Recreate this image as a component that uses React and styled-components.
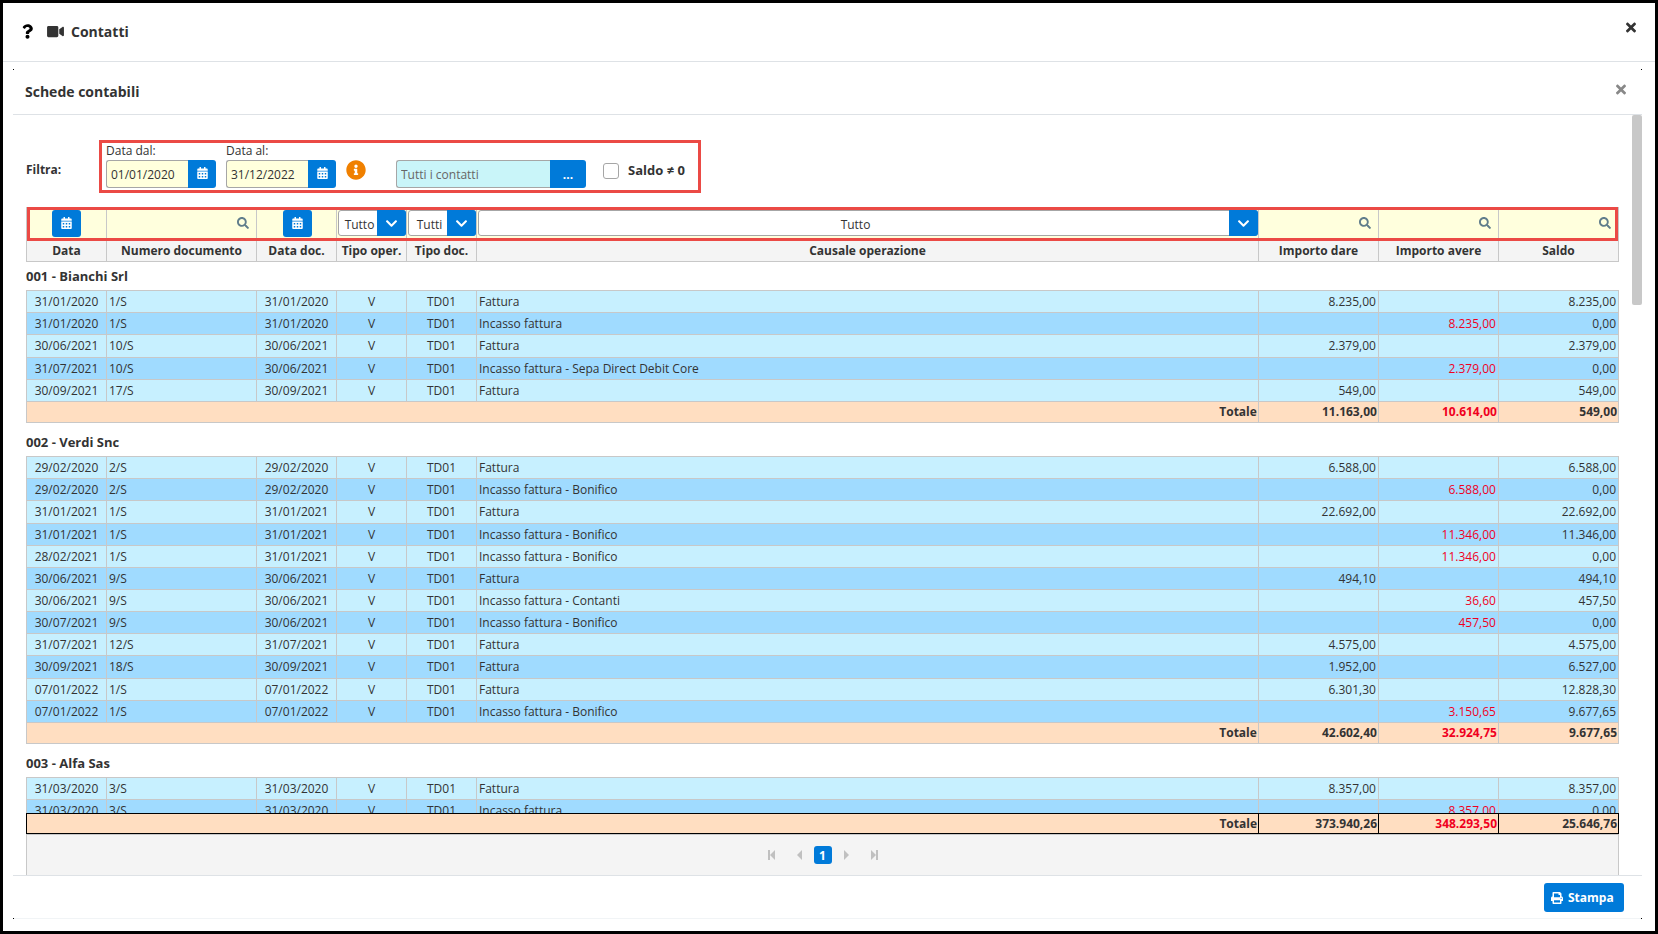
import React from "react";
import styled, { createGlobalStyle } from "styled-components";
import {
  FaQuestion,
  FaVideo,
  FaTimes,
  FaCalendarAlt,
  FaInfoCircle,
  FaSearch,
  FaChevronDown,
  FaPrint,
} from "react-icons/fa";

const c = {
  text: "#333333",
  blue: "#007ad9",
  line: "#c8c8c8",
  divider: "#dee2e6",
  head: "#f4f4f4",
  cream: "#ffffdd",
  rowLight: "#c7f0ff",
  rowDark: "#a0dbff",
  total: "#ffdec1",
  negative: "#f0001e",
  marker: "#eb4a45",
  field: "#a6a6a6",
};

const GlobalStyle = createGlobalStyle`
  *, *::before, *::after { box-sizing: border-box; }
  body { margin: 0; background: #fff; }
  body, button, input, select {
    font-family: "Open Sans", "Noto Sans", sans-serif;
    font-size: 12px;
    color: ${c.text};
  }
`;

const Window = styled.div`
  display: flex;
  flex-direction: column;
  height: 100vh;
  border: 3px solid #000;
  background: #fff;
`;

const TitleBar = styled.header`
  display: flex;
  align-items: center;
  flex: none;
  height: 59px;
  padding: 0 19px 2px 19px;
  border-bottom: 1px solid ${c.divider};
`;

const Title = styled.h1`
  margin: 0 auto 0 7px;
  font-size: 14px;
  font-weight: 700;
`;

const IconButton = styled.button`
  display: flex;
  padding: 0;
  border: 0;
  background: none;
  color: ${(p) => p.$color || c.text};
  margin-right: ${(p) => p.$gap || 0}px;
  padding-bottom: ${(p) => p.$lift || 0}px;
  cursor: pointer;
`;

const Panel = styled.section`
  position: relative;
  display: flex;
  flex-direction: column;
  flex: 1;
  min-height: 0;
  margin: 7px 13px 12px 10px;
  border-bottom: 1px solid #f1f4f6;
`;

const CornerDot = styled.span`
  position: absolute;
  width: 1px;
  height: 1px;
  background: #000;
  ${(p) => p.$v}: ${(p) => (p.$v === "bottom" ? "-1px" : 0)};
  ${(p) => p.$h}: 0;
`;

const PanelHeader = styled.div`
  display: flex;
  align-items: center;
  justify-content: space-between;
  flex: none;
  height: 46px;
  padding: 0 16px 0 12px;
  border-bottom: 1px solid ${c.divider};
`;

const PanelTitle = styled.h2`
  margin: 0;
  font-size: 14px;
  font-weight: 700;
`;

const Body = styled.div`
  display: flex;
  flex: 1;
  min-height: 0;
`;

const Content = styled.div`
  display: flex;
  flex-direction: column;
  flex: 1;
  min-width: 0;
  padding: 25px 13px 0 13px;
`;

const ScrollTrack = styled.div`
  width: 10px;
`;

const ScrollThumb = styled.div`
  height: 25%;
  border-radius: 2px;
  background: #c8c8c8;
`;

const FilterForm = styled.form`
  display: flex;
  align-items: center;
  flex: none;
  margin-bottom: 14px;
`;

const FilterCaption = styled.strong`
  width: 73px;
  padding-top: 6px;
`;

const FilterBox = styled.div`
  display: flex;
  align-items: flex-end;
  height: 53px;
  padding: 0 13px 2px 4px;
  border: 3px solid ${c.marker};
`;

const Field = styled.div`
  display: flex;
  flex-direction: column;
  margin-right: 10px;
`;

const FieldLabel = styled.label`
  height: 17px;
  line-height: 15px;
`;

const InputGroup = styled.div`
  display: flex;
  height: 28px;
  width: ${(p) => p.$width}px;
`;

const TextInput = styled.input`
  flex: 1;
  min-width: 0;
  padding: 1px 4px 0;
  border: 1px solid ${c.field};
  border-right: 0;
  border-radius: 3px 0 0 3px;
  background: ${(p) => p.$bg};
  &::placeholder {
    color: #666;
    opacity: 1;
  }
`;

const BlueButton = styled.button`
  display: inline-flex;
  align-items: center;
  justify-content: center;
  flex: none;
  width: ${(p) => p.$width}px;
  height: ${(p) => p.$height}px;
  padding: 0;
  gap: 5px;
  border: 0;
  border-radius: ${(p) => p.$radius || "3px"};
  background: ${c.blue};
  color: #fff;
  font-weight: 700;
  cursor: pointer;
`;

const StampButton = styled(BlueButton)`
  justify-content: flex-start;
  padding-left: 7px;
`;

const CalendarIcon = styled(FaCalendarAlt)`
  width: 11px;
  height: 12px;
  margin-bottom: 2px;
`;

const InfoSlot = styled.div`
  height: 28px;
  margin-right: 30px;
  color: #f08000;
`;

const CheckRow = styled.div`
  display: flex;
  align-items: center;
  gap: 9px;
  height: 28px;
  margin-left: 17px;
  padding-bottom: 6px;
`;

const CheckBox = styled.input`
  appearance: none;
  width: 16px;
  height: 16px;
  margin: 0;
  border: 1px solid ${c.field};
  border-radius: 3px;
  background: #fff;
`;

const CheckLabel = styled.label`
  padding-bottom: 2px;
  font-size: 13px;
  font-weight: 700;
`;

const Table = styled.table`
  width: 100%;
  table-layout: fixed;
  border-collapse: separate;
  border-spacing: 0;
`;

const HeadWrap = styled.div`
  position: relative;
  flex: none;
`;

const HeadMarker = styled.div`
  position: absolute;
  inset: 0 1px auto 1px;
  height: 34px;
  border: 3px solid ${c.marker};
  pointer-events: none;
`;

const FilterCell = styled.td`
  height: 34px;
  padding: 3px 0 0 1px;
  border-right: 1px solid ${c.line};
  background: ${c.cream};
  text-align: center;
  vertical-align: top;
  &:first-child {
    padding-left: 0;
    border-left: 1px solid ${c.line};
  }
`;

const ColumnHead = styled.th`
  height: 21px;
  padding: 0;
  border-right: 1px solid ${c.line};
  border-bottom: 1px solid ${c.line};
  background: ${c.head};
  line-height: 20px;
  white-space: nowrap;
  &:first-child {
    border-left: 1px solid ${c.line};
  }
`;

const SearchBox = styled.div`
  display: flex;
  align-items: center;
  height: 26px;
  padding: 0 7px 1px 0;
  color: #607d8b;
`;

const SearchInput = styled.input`
  flex: 1;
  min-width: 0;
  padding: 0 4px;
  border: 0;
  outline: 0;
  background: transparent;
`;

const SelectBox = styled.div`
  display: grid;
  grid-template-columns: 1fr 29px;
  height: 26px;
`;

const Select = styled.select`
  grid-area: 1 / 1 / 2 / 3;
  appearance: none;
  width: 100%;
  padding: 2px 27px 0 2px;
  border: 1px solid ${c.field};
  border-radius: 3px;
  background: #fff;
  text-align: center;
  text-align-last: center;
`;

const SelectArrow = styled.span`
  grid-area: 1 / 2 / 2 / 3;
  display: flex;
  align-items: center;
  justify-content: center;
  border-radius: 0 3px 3px 0;
  background: ${c.blue};
  color: #fff;
  pointer-events: none;
`;

const Groups = styled.div`
  flex: 1;
  min-height: 0;
  overflow-y: auto;
  scrollbar-width: none;
`;

const GroupTitle = styled.th`
  height: ${(p) => (p.$first ? 29 : 34)}px;
  padding: ${(p) => (p.$first ? 0 : 4)}px 0 0;
  border-bottom: 1px solid ${c.line};
  font-size: 13px;
  font-weight: 700;
  line-height: 18px;
  text-align: left;
`;

const DataRow = styled.tr`
  height: 22px;
  background: ${(p) => (p.$dark ? c.rowDark : c.rowLight)};
  &:nth-child(7n + 4) {
    height: 23px;
  }
`;

const Cell = styled.td`
  padding: 0 2px;
  border-right: 1px solid ${c.line};
  border-bottom: 1px solid ${c.line};
  line-height: 18px;
  text-align: ${(p) => p.$align || "left"};
  color: ${(p) => (p.$negative ? c.negative : c.text)};
  white-space: nowrap;
  &:first-child {
    border-left: 1px solid ${c.line};
  }
`;

const TotalCell = styled.td`
  height: 21px;
  padding: 0 1px;
  border: 0 solid ${(p) => (p.$grand ? "#000" : c.line)};
  border-width: ${(p) => (p.$grand ? 1 : 0)}px 1px 1px 0;
  background: ${c.total};
  color: ${(p) => (p.$negative ? c.negative : c.text)};
  font-weight: 700;
  line-height: 18px;
  text-align: right;
  &:first-child {
    border-left-width: 1px;
  }
`;

const Pager = styled.nav`
  display: flex;
  align-items: center;
  justify-content: center;
  flex: none;
  height: 41px;
  border: 1px solid ${c.line};
  border-bottom: 0;
  background: ${c.head};
`;

const PagerButton = styled.button`
  display: flex;
  align-items: center;
  justify-content: center;
  width: 28px;
  height: 18px;
  padding: 0;
  border: 0;
  background: none;
  color: #c0c0c0;
`;

const Footer = styled.footer`
  display: flex;
  justify-content: flex-end;
  flex: none;
  height: 43px;
  padding: 7px 18px 0 0;
  border-top: 1px solid ${c.divider};
`;

const columns = [
  ["Data", 81],
  ["Numero documento", 150],
  ["Data doc.", 80],
  ["Tipo oper.", 70],
  ["Tipo doc.", 70],
  ["Causale operazione"],
  ["Importo dare", 120],
  ["Importo avere", 120],
  ["Saldo", 120],
];

/* date, number, document date, description, debit, credit, balance */
const groups = [
  {
    name: "001 - Bianchi Srl",
    rows: [
      ["31/01/2020", "1/S", "31/01/2020", "Fattura", "8.235,00", "", "8.235,00"],
      ["31/01/2020", "1/S", "31/01/2020", "Incasso fattura", "", "8.235,00", "0,00"],
      ["30/06/2021", "10/S", "30/06/2021", "Fattura", "2.379,00", "", "2.379,00"],
      ["31/07/2021", "10/S", "30/06/2021", "Incasso fattura - Sepa Direct Debit Core", "", "2.379,00", "0,00"],
      ["30/09/2021", "17/S", "30/09/2021", "Fattura", "549,00", "", "549,00"],
    ],
    total: ["11.163,00", "10.614,00", "549,00"],
  },
  {
    name: "002 - Verdi Snc",
    rows: [
      ["29/02/2020", "2/S", "29/02/2020", "Fattura", "6.588,00", "", "6.588,00"],
      ["29/02/2020", "2/S", "29/02/2020", "Incasso fattura - Bonifico", "", "6.588,00", "0,00"],
      ["31/01/2021", "1/S", "31/01/2021", "Fattura", "22.692,00", "", "22.692,00"],
      ["31/01/2021", "1/S", "31/01/2021", "Incasso fattura - Bonifico", "", "11.346,00", "11.346,00"],
      ["28/02/2021", "1/S", "31/01/2021", "Incasso fattura - Bonifico", "", "11.346,00", "0,00"],
      ["30/06/2021", "9/S", "30/06/2021", "Fattura", "494,10", "", "494,10"],
      ["30/06/2021", "9/S", "30/06/2021", "Incasso fattura - Contanti", "", "36,60", "457,50"],
      ["30/07/2021", "9/S", "30/06/2021", "Incasso fattura - Bonifico", "", "457,50", "0,00"],
      ["31/07/2021", "12/S", "31/07/2021", "Fattura", "4.575,00", "", "4.575,00"],
      ["30/09/2021", "18/S", "30/09/2021", "Fattura", "1.952,00", "", "6.527,00"],
      ["07/01/2022", "1/S", "07/01/2022", "Fattura", "6.301,30", "", "12.828,30"],
      ["07/01/2022", "1/S", "07/01/2022", "Incasso fattura - Bonifico", "", "3.150,65", "9.677,65"],
    ],
    total: ["42.602,40", "32.924,75", "9.677,65"],
  },
  {
    name: "003 - Alfa Sas",
    rows: [
      ["31/03/2020", "3/S", "31/03/2020", "Fattura", "8.357,00", "", "8.357,00"],
      ["31/03/2020", "3/S", "31/03/2020", "Incasso fattura", "", "8.357,00", "0,00"],
    ],
  },
];

const Columns = () => (
  <colgroup>
    {columns.map(([label, width]) => (
      <col key={label} style={width ? { width } : undefined} />
    ))}
  </colgroup>
);

const DateField = ({ id, label, value }) => (
  <Field>
    <FieldLabel htmlFor={id}>{label}</FieldLabel>
    <InputGroup $width={110}>
      <TextInput id={id} type="text" defaultValue={value} $bg={c.cream} />
      <BlueButton type="button" aria-label={label} $width={28} $height={28} $radius="0 3px 3px 0">
        <CalendarIcon />
      </BlueButton>
    </InputGroup>
  </Field>
);

const DateFilter = ({ label }) => (
  <FilterCell>
    <BlueButton type="button" aria-label={label} $width={29} $height={27}>
      <CalendarIcon />
    </BlueButton>
  </FilterCell>
);

const SearchFilter = ({ label }) => (
  <FilterCell>
    <SearchBox>
      <SearchInput type="text" aria-label={label} />
      <FaSearch size={12} />
    </SearchBox>
  </FilterCell>
);

const SelectFilter = ({ label, value }) => (
  <FilterCell>
    <SelectBox>
      <Select aria-label={label} defaultValue={value}>
        <option>{value}</option>
      </Select>
      <SelectArrow>
        <FaChevronDown size={13} />
      </SelectArrow>
    </SelectBox>
  </FilterCell>
);

const TotalRow = ({ values, grand }) => (
  <tr>
    <TotalCell colSpan={6} $grand={grand}>Totale</TotalCell>
    {values.map((v, i) => (
      <TotalCell key={i} $grand={grand} $negative={i === 1}>{v}</TotalCell>
    ))}
  </tr>
);

const SeekIcon = ({ bar, flip }) => (
  <svg width="8" height="10" viewBox="0 0 8 10" fill="currentColor" aria-hidden="true">
    <g transform={flip ? "translate(8 0) scale(-1 1)" : undefined}>
      {bar && <rect x="0" y="0" width="2" height="10" />}
      <path d={bar ? "M2 5 7 0v10z" : "M1 5 6 0v10z"} />
    </g>
  </svg>
);

export default function App() {
  return (
    <>
      <GlobalStyle />
      <Window>
        <TitleBar>
          <IconButton aria-label="Aiuto" $color="#000" $gap={14}>
            <FaQuestion style={{ width: 11, height: 17 }} />
          </IconButton>
          <IconButton aria-label="Video">
            <FaVideo style={{ width: 17, height: 15 }} />
          </IconButton>
          <Title>Contatti</Title>
          <IconButton aria-label="Chiudi finestra" $lift={7}>
            <FaTimes style={{ width: 10, height: 15 }} />
          </IconButton>
        </TitleBar>

        <Panel>
          <CornerDot $v="top" $h="left" />
          <CornerDot $v="top" $h="right" />
          <CornerDot $v="bottom" $h="left" />
          <CornerDot $v="bottom" $h="right" />
          <PanelHeader>
            <PanelTitle>Schede contabili</PanelTitle>
            <IconButton aria-label="Chiudi scheda" $color="#888888" $lift={4}>
              <FaTimes style={{ width: 10, height: 15 }} />
            </IconButton>
          </PanelHeader>

          <Body>
            <Content>
              <FilterForm>
                <FilterCaption>Filtra:</FilterCaption>
                <FilterBox>
                  <DateField id="from" label="Data dal:" value="01/01/2020" />
                  <DateField id="to" label="Data al:" value="31/12/2022" />
                  <InfoSlot>
                    <FaInfoCircle size={20} />
                  </InfoSlot>
                  <InputGroup $width={190}>
                    <TextInput type="text" aria-label="Contatti" placeholder="Tutti i contatti" $bg="#c9f5f9" />
                    <BlueButton type="button" $width={36} $height={28} $radius="0 3px 3px 0">...</BlueButton>
                  </InputGroup>
                  <CheckRow>
                    <CheckBox type="checkbox" id="nonzero" />
                    <CheckLabel htmlFor="nonzero">Saldo ≠ 0</CheckLabel>
                  </CheckRow>
                </FilterBox>
              </FilterForm>

              <HeadWrap>
                <Table>
                  <Columns />
                  <thead>
                    <tr>
                      <DateFilter label="Data" />
                      <SearchFilter label="Numero documento" />
                      <DateFilter label="Data doc." />
                      <SelectFilter label="Tipo oper." value="Tutto" />
                      <SelectFilter label="Tipo doc." value="Tutti" />
                      <SelectFilter label="Causale operazione" value="Tutto" />
                      <SearchFilter label="Importo dare" />
                      <SearchFilter label="Importo avere" />
                      <SearchFilter label="Saldo" />
                    </tr>
                    <tr>
                      {columns.map(([label]) => (
                        <ColumnHead key={label} scope="col">{label}</ColumnHead>
                      ))}
                    </tr>
                  </thead>
                </Table>
                <HeadMarker />
              </HeadWrap>

              <Groups>
                <Table>
                  <Columns />
                  {groups.map((g, gi) => (
                    <tbody key={g.name}>
                      <tr>
                        <GroupTitle colSpan={9} scope="rowgroup" $first={gi === 0}>{g.name}</GroupTitle>
                      </tr>
                      {g.rows.map(([date, num, docDate, desc, debit, credit, balance], i) => (
                        <DataRow key={i} $dark={i % 2 === 1}>
                          <Cell $align="center">{date}</Cell>
                          <Cell>{num}</Cell>
                          <Cell $align="center">{docDate}</Cell>
                          <Cell $align="center">V</Cell>
                          <Cell $align="center">TD01</Cell>
                          <Cell>{desc}</Cell>
                          <Cell $align="right">{debit}</Cell>
                          <Cell $align="right" $negative>{credit}</Cell>
                          <Cell $align="right">{balance}</Cell>
                        </DataRow>
                      ))}
                      {g.total && <TotalRow values={g.total} />}
                    </tbody>
                  ))}
                </Table>
              </Groups>

              <Table>
                <Columns />
                <tbody>
                  <TotalRow grand values={["373.940,26", "348.293,50", "25.646,76"]} />
                </tbody>
              </Table>
              <Pager aria-label="Pagine">
                <PagerButton aria-label="Prima"><SeekIcon bar /></PagerButton>
                <PagerButton aria-label="Precedente"><SeekIcon /></PagerButton>
                <BlueButton $width={18} $height={18}>1</BlueButton>
                <PagerButton aria-label="Successiva"><SeekIcon flip /></PagerButton>
                <PagerButton aria-label="Ultima"><SeekIcon bar flip /></PagerButton>
              </Pager>
            </Content>
            <ScrollTrack>
              <ScrollThumb />
            </ScrollTrack>
          </Body>

          <Footer>
            <StampButton $width={80} $height={29}>
              <FaPrint size={12} />
              Stampa
            </StampButton>
          </Footer>
        </Panel>
      </Window>
    </>
  );
}
